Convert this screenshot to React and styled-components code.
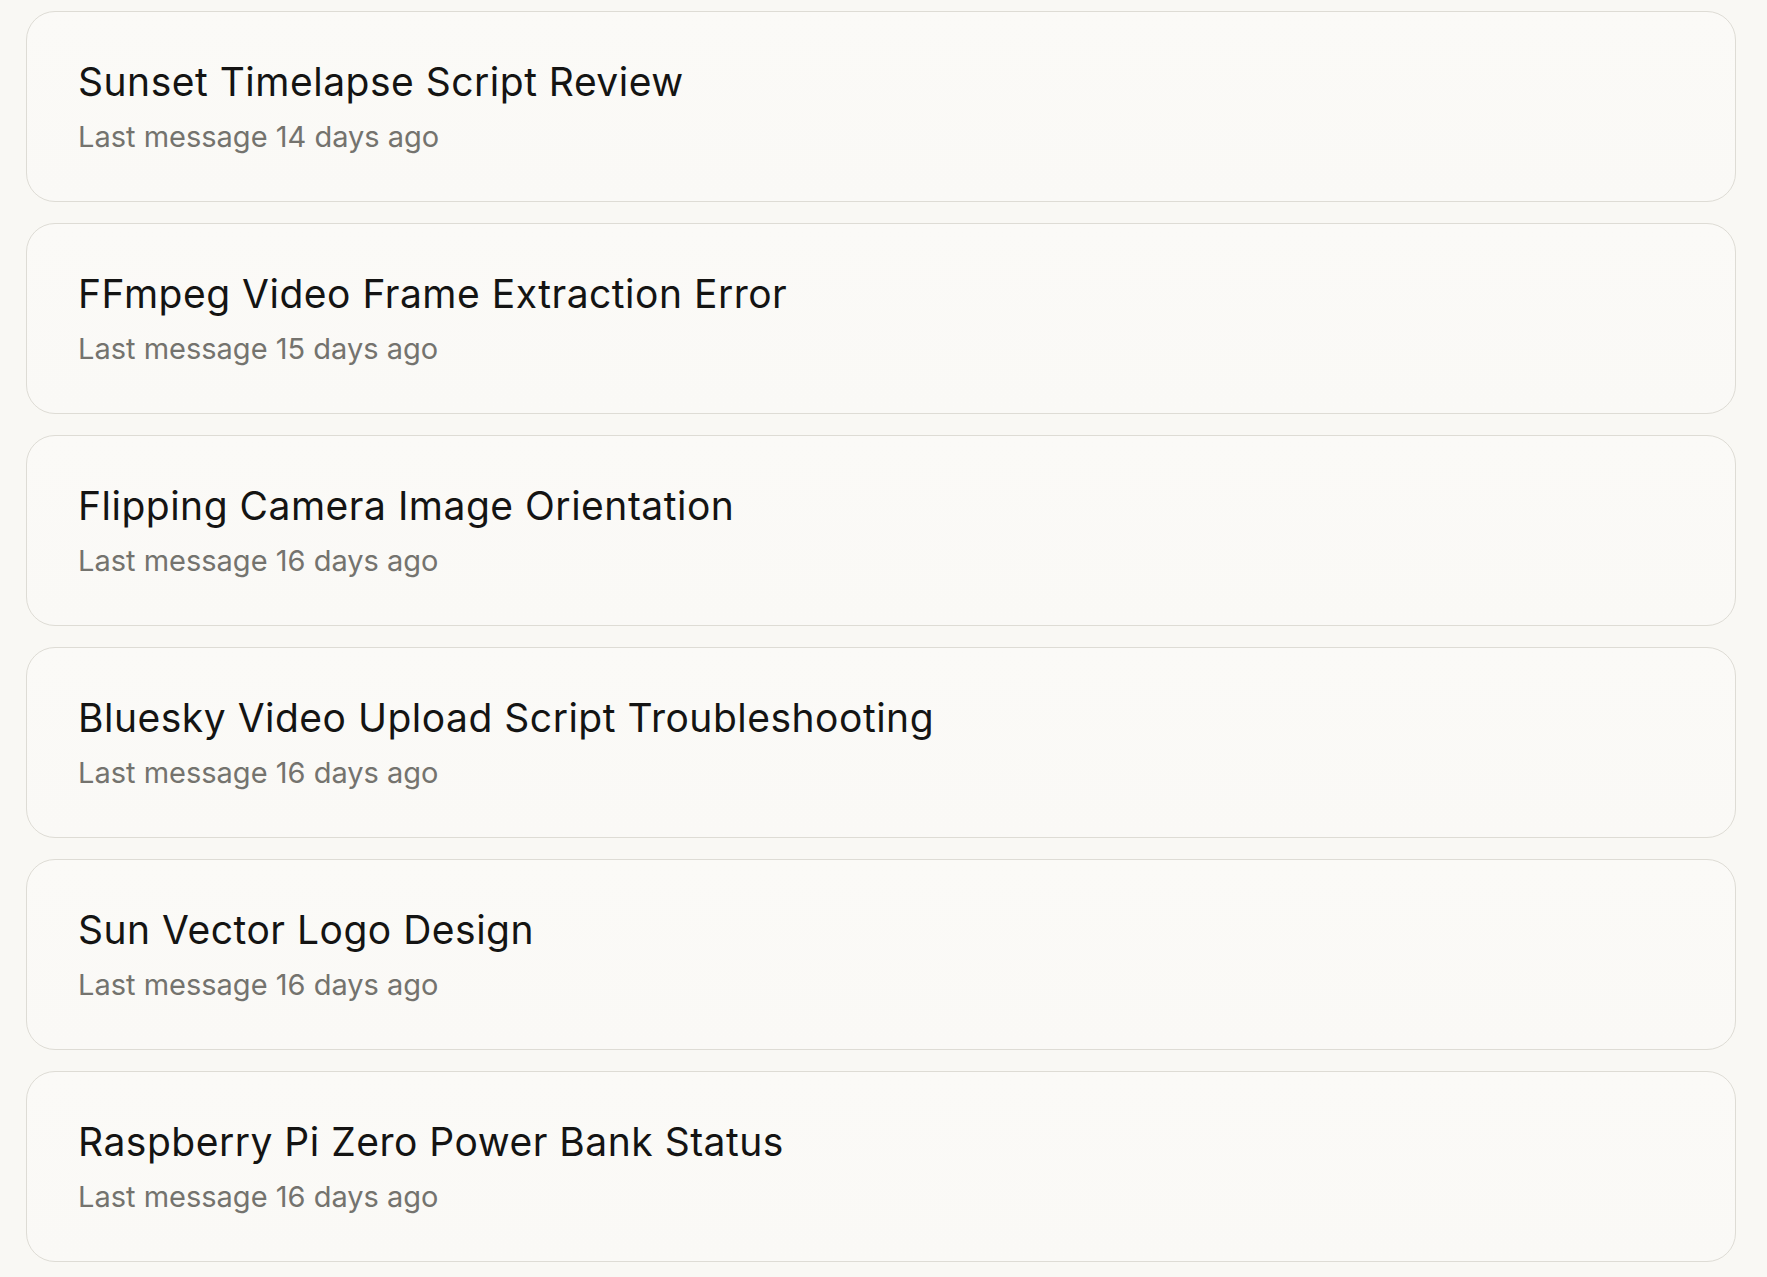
import React from 'react';
import styled, { createGlobalStyle } from 'styled-components';

const GlobalStyle = createGlobalStyle`
  html, body {
    margin: 0;
    padding: 0;
    background: #f9f8f4;
  }
  body {
    font-family: Inter, "Noto Sans", "Liberation Sans", sans-serif;
    -webkit-font-smoothing: antialiased;
  }
`;

const List = styled.ul`
  list-style: none;
  margin: 0;
  padding: 11px 31px 16px 26px;
  display: flex;
  flex-direction: column;
  gap: 21px;
`;

const Card = styled.li`
  box-sizing: border-box;
  height: 191px;
  padding: 0 51px;
  display: flex;
  flex-direction: column;
  justify-content: center;
  border: 1px solid #dedcd5;
  border-radius: 29px;
  background: linear-gradient(to bottom, #fbfaf7, #faf9f6);
  cursor: pointer;
`;

const Title = styled.div`
  font-size: 39px;
  line-height: 48px;
  color: #141413;
  letter-spacing: 0.5px;
  white-space: nowrap;
`;

const Meta = styled.div`
  margin-top: 13px;
  font-size: 29px;
  line-height: 36px;
  color: #74736e;
  white-space: nowrap;
`;

const chats = [
  { title: 'Sunset Timelapse Script Review', days: 14 },
  { title: 'FFmpeg Video Frame Extraction Error', days: 15 },
  { title: 'Flipping Camera Image Orientation', days: 16 },
  { title: 'Bluesky Video Upload Script Troubleshooting', days: 16 },
  { title: 'Sun Vector Logo Design', days: 16 },
  { title: 'Raspberry Pi Zero Power Bank Status', days: 16 },
];

const App = () => {
  return (
    <>
      <GlobalStyle />
      <List>
        {chats.map((c) => (
          <Card key={c.title}>
            <Title>{c.title}</Title>
            <Meta>Last message {c.days} days ago</Meta>
          </Card>
        ))}
      </List>
    </>
  );
};

export default App;
